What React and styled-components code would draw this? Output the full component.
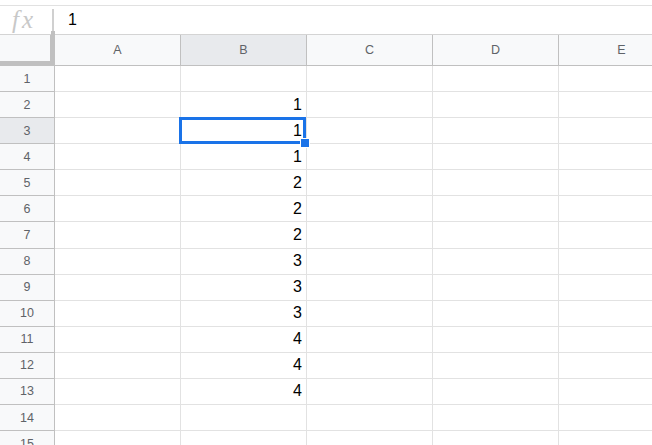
import React from "react";
import styled, { createGlobalStyle } from "styled-components";

const GlobalStyle = createGlobalStyle`
  html, body { margin: 0; padding: 0; background: #ffffff; }
  body { font-family: "Liberation Sans", Arial, sans-serif; }
`;

const Page = styled.div`
  width: 652px;
  height: 445px;
  overflow: hidden;
  background: #ffffff;
  position: relative;
`;

const TopGap = styled.div`
  height: 5px;
`;

const FormulaBar = styled.div`
  box-sizing: border-box;
  height: 30px;
  display: flex;
  align-items: center;
  border-top: 1px solid #e1e1e1;
  border-bottom: 1px solid #d4d4d4;
`;

const Fx = styled.div`
  width: 52px;
  padding-left: 12px;
  box-sizing: border-box;
  font-family: "Liberation Serif", "Times New Roman", serif;
  font-style: italic;
  font-size: 25px;
  color: #c8c8c8;
  letter-spacing: 3px;
  line-height: 28px;
`;

const Separator = styled.div`
  width: 2px;
  height: 22px;
  background: #d0d0d0;
`;

const FormulaValue = styled.div`
  margin-left: 14px;
  font-size: 16px;
  color: #000;
`;

const Grid = styled.div`
  display: grid;
  grid-template-columns: 55px repeat(5, 126px);
  grid-template-rows: 31px;
  grid-auto-rows: 26.08px;
`;

const Corner = styled.div`
  box-sizing: border-box;
  background: #f8f9fa;
  border-right: 5px solid #c0c0c0;
  border-bottom: 5px solid #c0c0c0;
  position: relative;
`;

const FreezeTab = styled.div`
  position: absolute;
  right: -5px;
  top: -4px;
  width: 4px;
  height: 4px;
  background: #c0c0c0;
`;

const ColHeader = styled.div`
  box-sizing: border-box;
  background: ${(p) => (p.$active ? "#e8eaed" : "#f8f9fa")};
  border-right: 1px solid #c0c0c0;
  border-bottom: 1px solid #c0c0c0;
  display: flex;
  align-items: center;
  justify-content: center;
  font-size: 12.5px;
  color: #5f6368;
`;

const RowHeader = styled.div`
  box-sizing: border-box;
  background: ${(p) => (p.$active ? "#e8eaed" : "#f8f9fa")};
  border-right: 1px solid #c0c0c0;
  border-bottom: 1px solid #c0c0c0;
  display: flex;
  align-items: center;
  justify-content: center;
  font-size: 12.5px;
  color: #5f6368;
`;

const Cell = styled.div`
  box-sizing: border-box;
  position: relative;
  border-right: 1px solid #e2e2e2;
  border-bottom: 1px solid #e2e2e2;
  display: flex;
  align-items: center;
  justify-content: flex-end;
  padding-right: 4px;
  font-size: 16px;
  color: #000;
  z-index: ${(p) => (p.$selected ? 2 : "auto")};
`;

const Selection = styled.div`
  position: absolute;
  left: -2px;
  top: -1px;
  right: 0;
  bottom: -1px;
  border: 3px solid #1a73e8;
  box-sizing: border-box;
  pointer-events: none;
`;

const Handle = styled.div`
  position: absolute;
  left: 119px;
  top: 20px;
  width: 8px;
  height: 8px;
  background: #1a73e8;
  border: 1px solid #ffffff;
`;

const columns = ["A", "B", "C", "D", "E"];
const values = { 2: 1, 3: 1, 4: 1, 5: 2, 6: 2, 7: 2, 8: 3, 9: 3, 10: 3, 11: 4, 12: 4, 13: 4 };
const rows = Array.from({ length: 15 }, (_, i) => i + 1);

export default function App() {
  return (
    <Page>
      <GlobalStyle />
      <TopGap />
      <FormulaBar>
        <Fx>fx</Fx>
        <Separator />
        <FormulaValue>1</FormulaValue>
      </FormulaBar>
      <Grid>
        <Corner>
          <FreezeTab />
        </Corner>
        {columns.map((c) => (
          <ColHeader key={c} $active={c === "B"}>
            {c}
          </ColHeader>
        ))}
        {rows.map((r) => {
          const selected = r === 3;
          return (
            <React.Fragment key={r}>
              <RowHeader $active={selected}>{r}</RowHeader>
              {columns.map((c) => (
                <Cell key={c} $selected={c === "B" && selected}>
                  {c === "B" && values[r] !== undefined ? values[r] : null}
                  {c === "B" && selected ? (
                    <>
                      <Selection />
                      <Handle />
                    </>
                  ) : null}
                </Cell>
              ))}
            </React.Fragment>
          );
        })}
      </Grid>
    </Page>
  );
}
